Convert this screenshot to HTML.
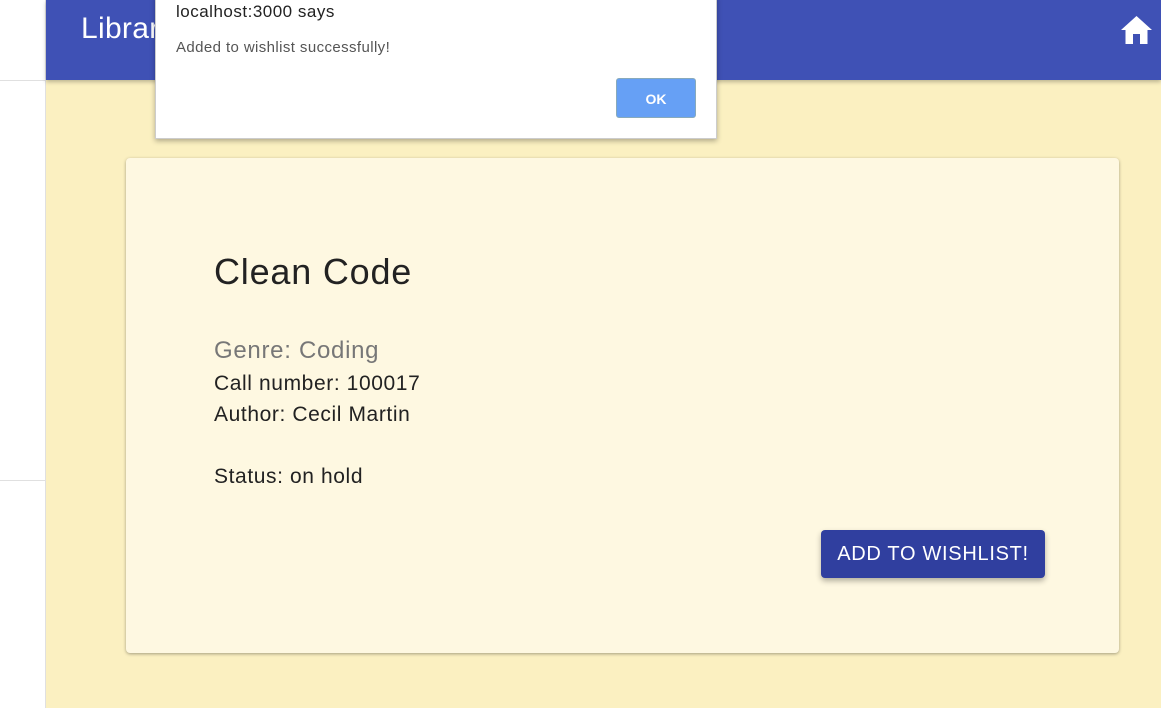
<!DOCTYPE html>
<html><head><style>
body{margin:0;width:1161px;height:708px;overflow:hidden;font-family:"Liberation Sans",sans-serif;background:#fbf0c1;position:relative}
.side{position:absolute;left:0;top:0;width:45px;height:708px;background:#fff;border-right:1px solid #e0e0e0}
.hl{position:absolute;left:0;width:45px;height:1px;background:#e0e0e0}
.hdr{position:absolute;left:46px;top:0;right:0;height:80px;background:#3f51b5;box-shadow:0 2px 4px rgba(0,0,0,.25)}
.hdr .t{position:absolute;left:35px;top:12px;color:#fff;font-size:30px;letter-spacing:0.3px}
.card{position:absolute;left:126px;top:158px;width:993px;height:495px;background:#fef8e1;border-radius:4px;box-shadow:0 1px 3px rgba(0,0,0,.35)}
.card h1{position:absolute;left:88px;top:93px;margin:0;font-weight:normal;font-size:36px;letter-spacing:0.8px;color:#222}
.g{position:absolute;left:88px;top:179px;font-size:24px;letter-spacing:0.7px;color:#777}
.l{position:absolute;left:88px;font-size:21px;letter-spacing:0.6px;color:#222}
.btn{position:absolute;left:695px;top:372px;width:224px;height:48px;background:#303f9f;color:#fff;border-radius:4px;font-size:20px;letter-spacing:0.7px;line-height:48px;text-align:center;box-shadow:0 3px 6px rgba(0,0,0,.3)}
.dlg{position:absolute;left:155px;top:-4px;width:560px;height:142px;background:#fff;border:1px solid #ccc;border-top:none;box-shadow:0 2px 5px rgba(0,0,0,.3)}
.dlg .a{position:absolute;left:20px;top:6px;font-size:17px;letter-spacing:0.5px;color:#222}
.dlg .b{position:absolute;left:20px;top:43px;font-size:15px;letter-spacing:0.4px;color:#555}
.ok{position:absolute;left:460px;top:82px;width:80px;height:40px;background:#66a0f5;border:1px solid #8ab;border-radius:3px;color:#fff;font-size:14px;font-weight:bold;text-align:center;line-height:40px;box-sizing:border-box}
</style></head><body>
<div class="side"></div><div class="hl" style="top:80px"></div><div class="hl" style="top:480px"></div>
<div class="hdr"><div class="t">Library</div>
<svg style="position:absolute;left:1075px;top:16px" width="31" height="28" viewBox="0 0 31 28"><path d="M15.5 0L0 14h4.5v14h7.5v-10h7v10h7.5V14H31z" fill="#fff"/></svg></div>
<div class="card"><h1>Clean Code</h1>
<div class="g">Genre: Coding</div>
<div class="l" style="top:214px">Call number: 100017</div>
<div class="l" style="top:245px">Author: Cecil Martin</div>
<div class="l" style="top:307px">Status: on hold</div>
<div class="btn">ADD TO WISHLIST!</div></div>
<div class="dlg"><div class="a">localhost:3000 says</div><div class="b">Added to wishlist successfully!</div><div class="ok">OK</div></div>
</body></html>
